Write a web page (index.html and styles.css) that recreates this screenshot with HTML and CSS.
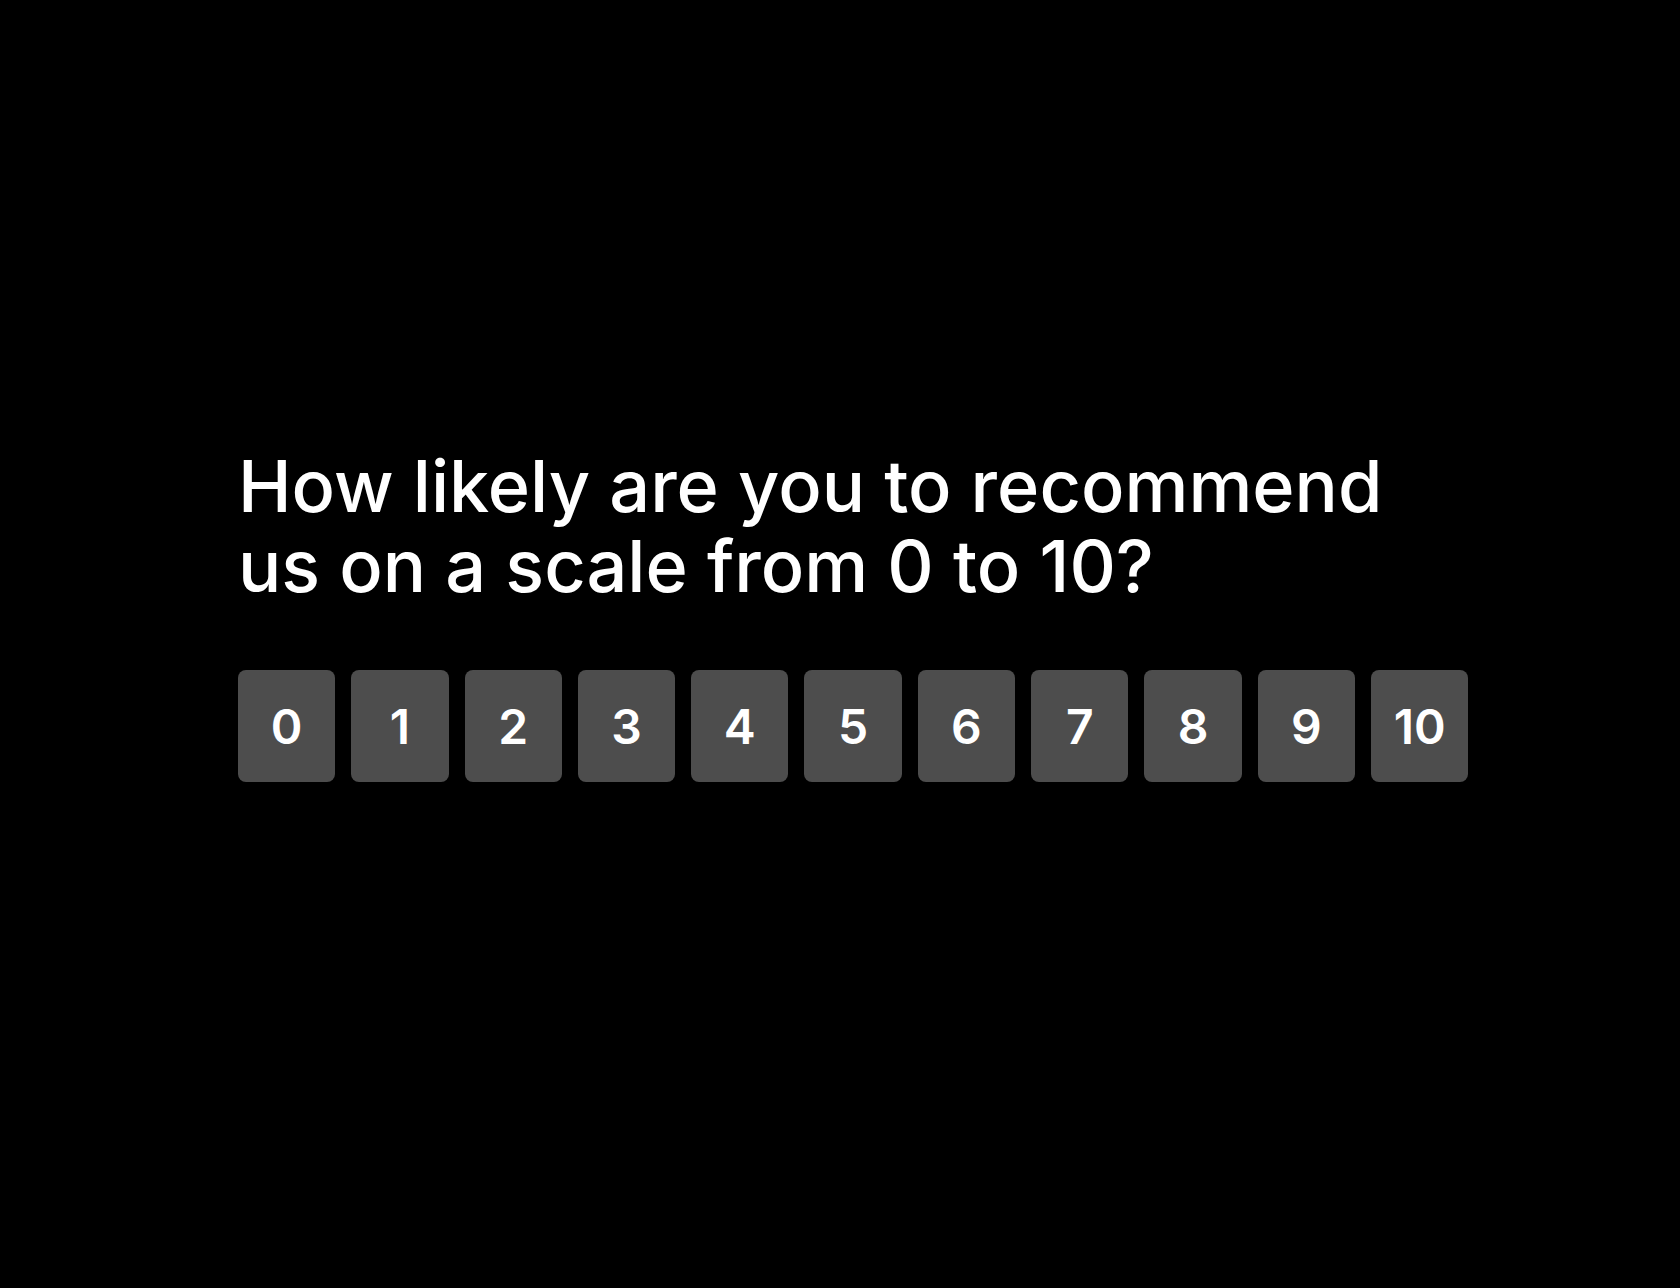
FILE: index.html
```html
<!DOCTYPE html>
<html lang="en">
<head>
    <meta charset="UTF-8">
    <meta name="viewport" content="width=device-width, initial-scale=1.0">
    <title>Rate us</title>
    <link rel="stylesheet" href="styles.css">
</head>
<body>
    <main class="survey">
        <h1 class="question">How likely are you to recommend us on a scale from 0 to 10?</h1>
        <div class="scale">
            <button>0</button>
            <button>1</button>
            <button>2</button>
            <button>3</button>
            <button>4</button>
            <button>5</button>
            <button>6</button>
            <button>7</button>
            <button>8</button>
            <button>9</button>
            <button>10</button>
        </div>
    </main>
</body>
</html>
```

FILE: styles.css
```css
html, body {
    margin: 0;
    background-color: #000;
}
body {
    color: #fff;
    font-family: Inter, "Noto Sans", sans-serif;
    min-height: 1288px;
}
.survey {
    padding: 446px 0 0 238px;
}
.question {
    margin: 0;
    max-width: 1180px;
    font-size: 72px;
    line-height: 80px;
    font-weight: 500;
}
.scale {
    display: flex;
    gap: 16px;
    margin-top: 64px;
}
.scale button {
    width: 97.3px;
    height: 112px;
    padding: 0;
    border: none;
    border-radius: 8px;
    background-color: #4d4d4d;
    color: #fff;
    font-family: inherit;
    font-size: 48px;
    font-weight: 600;
    cursor: pointer;
}
```
